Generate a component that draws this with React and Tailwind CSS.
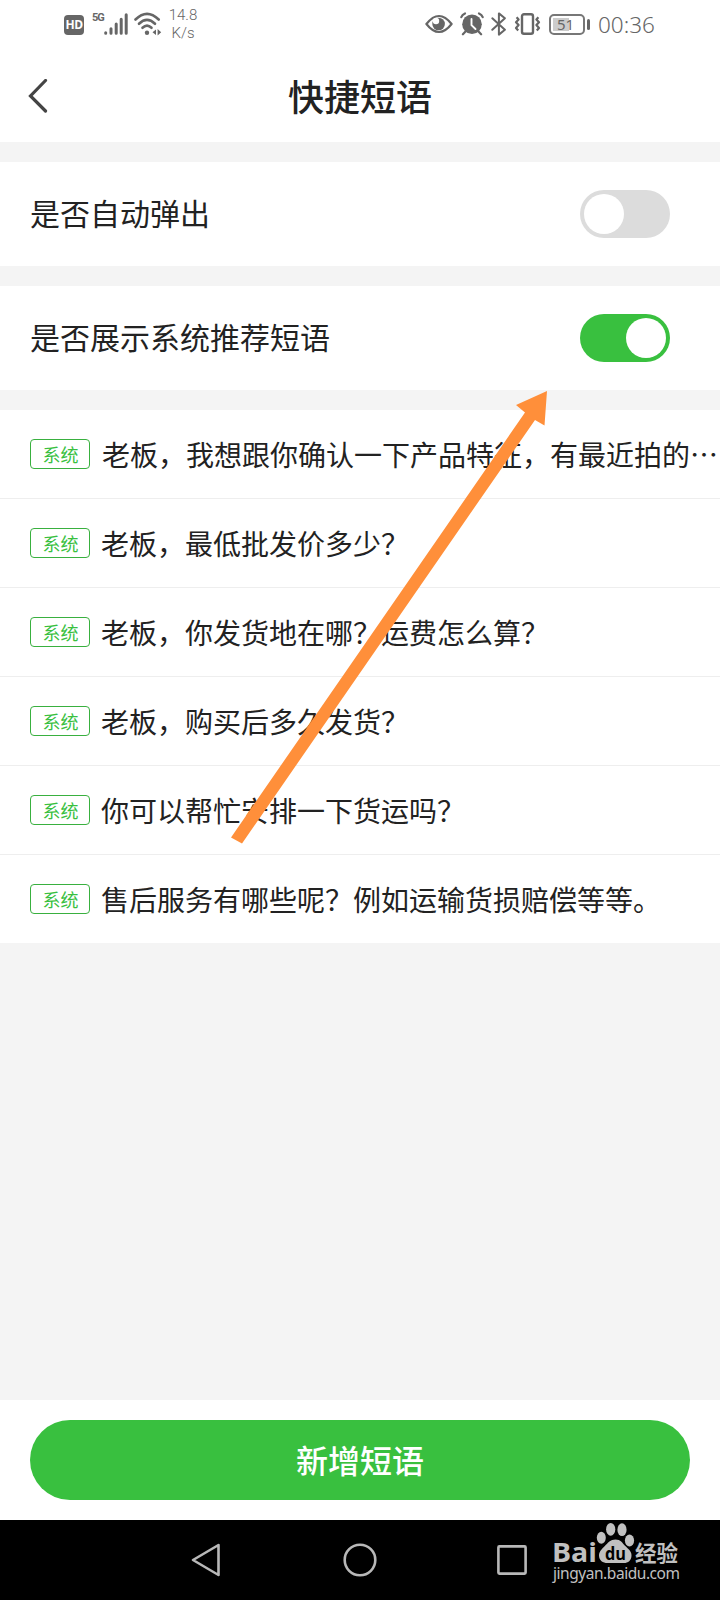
const phrases = [
  "老板，我想跟你确认一下产品特征，有最近拍的…",
  "老板，最低批发价多少？",
  "老板，你发货地在哪？运费怎么算？",
  "老板，购买后多久发货？",
  "你可以帮忙安排一下货运吗？",
  "售后服务有哪些呢？例如运输货损赔偿等等。",
];

function SignalIcon() {
  return (
    <svg width="24" height="22" viewBox="0 0 24 22" className="mt-[13px]" stroke="#666" strokeWidth="3" strokeLinecap="round">
      <path d="M1.7 20.3v-.6M7 20.3v-4.5M12.2 20.3V11M17.2 20.3V6.3M22.2 20.3V1.8" />
    </svg>
  );
}

function WifiIcon() {
  return (
    <svg width="28" height="24" viewBox="0 0 28 24" className="ml-[6px] mt-[12px]" fill="none" stroke="#666" strokeWidth="2.6" strokeLinecap="round">
      <path d="M1.5 7.5Q13 -3.8 24.7 7.5" />
      <path d="M5 11.8Q13 4 21 11.8" />
      <path d="M8.5 15.8Q13 11.6 17.5 15.8" />
      <circle cx="13" cy="20.8" r="2.2" fill="#666" stroke="none" />
      <path d="M22 17.500v5.500l-3.500-2.700zM23.600 17v6.500l3.600-3.200z" fill="#666" stroke="none" />
    </svg>
  );
}

function EyeIcon() {
  return (
    <svg width="28" height="20" viewBox="0 0 28 20" className="mt-[14px]">
      <path d="M1.4 10Q14 -6 26.6 10Q14 26 1.4 10z" fill="none" stroke="#666" strokeWidth="2.2" strokeLinejoin="round" />
      <circle cx="13.6" cy="10" r="6.3" fill="#666" />
      <circle cx="11" cy="7" r="3.2" fill="#fff" />
    </svg>
  );
}

function AlarmIcon() {
  return (
    <svg width="24" height="24" viewBox="0 0 24 24" className="ml-[7px] mt-[12px]" fill="none" strokeLinecap="round">
      <circle cx="12" cy="12.3" r="9.8" fill="#666" />
      <path d="M1.3 5.2Q2.2 2.8 5 1.5M22.7 5.2Q21.8 2.8 19 1.5M5.5 19.5l-2.6 2.8M18.5 19.5l2.6 2.8" stroke="#666" strokeWidth="2.2" />
      <path d="M11.5 7v6.2l4 3.8" stroke="#fff" strokeWidth="1.9" />
    </svg>
  );
}

function BluetoothIcon() {
  return (
    <svg width="16" height="24" viewBox="0 0 16 24" className="ml-[7px] mt-[12px]" fill="none" stroke="#666" strokeWidth="2" strokeLinejoin="round" strokeLinecap="round">
      <path d="M1.3 6.3l12.6 11.5-6 4.8V1.4l6 4.8L1.3 17.8" />
    </svg>
  );
}

function VibrateIcon() {
  return (
    <svg width="28" height="24" viewBox="0 0 28 24" className="ml-[7px] mt-[12px]" fill="none" stroke="#666">
      <rect x="8" y="2.2" width="11" height="19.6" rx="2" strokeWidth="2.4" />
      <path d="M2.6 5.2l2 2.3-2.6 2.8 2.6 2.8-2.6 2.8 2.2 2.5M24.4 5.2l-2 2.3 2.6 2.8-2.6 2.8 2.6 2.8-2.2 2.5" strokeWidth="2.2" strokeLinejoin="round" />
    </svg>
  );
}

function StatusBar() {
  return (
    <div className="flex h-[50px] items-start pl-[64px] pr-[60px] font-['Noto_Sans'] text-[#666]">
      <div className="mt-[15px] flex h-[20px] w-[20px] items-center justify-center rounded-[4px] bg-[#666] font-['Open_Sans'] text-[12px] leading-none font-bold tracking-[-0.5px] text-white">
        HD
      </div>
      <span className="mt-[12px] ml-[8px] w-[12px] font-['Roboto'] text-[11px] leading-[12px] font-bold tracking-[-1px]">5G</span>
      <SignalIcon />
      <WifiIcon />
      <div className="ml-[5px] mt-[6px] w-[32px] text-center font-['Roboto'] text-[15px] leading-[18px] font-light">
        <div>14.8</div>
        <div>K/s</div>
      </div>
      <div className="ml-auto flex items-start">
        <EyeIcon />
        <AlarmIcon />
        <BluetoothIcon />
        <VibrateIcon />
        <div className="ml-[7px] mt-[14px] flex items-center">
          <div className="relative flex h-[21px] w-[36px] items-center justify-center rounded-[5px] border-2 border-[#777] text-[15px] leading-none">
            <div className="absolute top-[2px] left-[2px] h-[13px] w-[16px] bg-[#ccc]" />
            <span className="relative -mt-px pr-[3px]">51</span>
          </div>
          <div className="ml-[2px] h-[11px] w-[3px] rounded-sm bg-[#666]" />
        </div>
        <span className="ml-[8px] mt-[10px] w-[62px] text-[22.5px] leading-[30px] font-light whitespace-nowrap">00:36</span>
      </div>
    </div>
  );
}

function Toggle({ on }) {
  return (
    <div
      className={`flex h-[48px] w-[90px] items-center rounded-full px-[4px] ${
        on ? "justify-end bg-[#39c03f]" : "justify-start bg-[#dcdcdc]"
      }`}
    >
      <div className="h-[40px] w-[40px] rounded-full bg-white" />
    </div>
  );
}

function SettingRow({ label, on }) {
  return (
    <div className="mt-[20px] flex h-[104px] items-center justify-between bg-white pr-[50px] pl-[30px]">
      <span className="pb-[4px] text-[30px] leading-none">{label}</span>
      <Toggle on={on} />
    </div>
  );
}

function BaiduMark() {
  return (
    <svg width="130" height="66" viewBox="0 0 130 66" className="absolute top-[2px] left-[551px]" fill="#c0c0c0">
      <text x="1" y="39.500" fontFamily="Open Sans, sans-serif" fontWeight="700" fontSize="27" textLength="45" lengthAdjust="spacingAndGlyphs">Bai</text>
      <ellipse cx="50.300" cy="15.700" rx="4.500" ry="6" />
      <ellipse cx="59.700" cy="7.300" rx="4.600" ry="6.400" />
      <ellipse cx="71" cy="7.700" rx="4.600" ry="6.400" />
      <ellipse cx="78.500" cy="18.500" rx="4.600" ry="6" />
      <path d="M64.500 17.500c5 0 7 3.500 9.500 6.300 3 3 6.500 5.200 6.500 9.700 0 5-3.500 7.500-7.500 7.500H56.500c-4.500 0-8.500-2.500-8.500-7.500 0-4 3-6.500 6-9.700 2.700-2.800 5.500-6.300 10.500-6.300z" />
      <text x="54" y="37.500" fill="#000" fontFamily="Open Sans, sans-serif" fontWeight="700" fontSize="18" textLength="21" lengthAdjust="spacingAndGlyphs">du</text>
      <text x="84" y="38.500" fontFamily="Noto Sans CJK SC, sans-serif" fontWeight="700" fontSize="21.500" textLength="43">经验</text>
      <text x="2" y="56.500" fontFamily="Noto Sans, sans-serif" fontSize="15.500" textLength="127">jingyan.baidu.com</text>
    </svg>
  );
}

function NavBar() {
  return (
    <div className="relative h-[80px] bg-black">
      <svg width="720" height="80" viewBox="0 0 720 80" fill="none" stroke="#b8b8b8" strokeWidth="2.6" strokeLinejoin="round">
        <path d="M218.500 25v30L193 40z" />
        <circle cx="360" cy="40" r="15.300" />
        <rect x="498.400" y="26.400" width="27.200" height="27.200" rx="1" />
      </svg>
      <BaiduMark />
    </div>
  );
}

export default function App() {
  return (
    <div className="relative flex h-[1600px] w-[720px] flex-col overflow-hidden bg-[#f4f4f4] font-['Noto_Sans_CJK_SC',sans-serif] text-[#222]">
      <div className="h-[142px] bg-white">
        <StatusBar />
        <div className="grid h-[92px] grid-cols-[1fr_auto_1fr] items-center">
          <svg width="20" height="34" viewBox="0 0 20 34" className="ml-[28px]" fill="none" stroke="#444" strokeWidth="3.2" strokeLinecap="round">
            <path d="M17.500 1.500L2.500 17l15 15" />
          </svg>
          <h1 className="pb-[3px] text-[36px] leading-none font-medium">快捷短语</h1>
        </div>
      </div>

      <SettingRow label="是否自动弹出" on={false} />
      <SettingRow label="是否展示系统推荐短语" on />

      <div className="mt-[20px] bg-white">
        {phrases.map((phrase, i) => (
          <div
            key={phrase}
            className="flex h-[89px] items-center border-b border-[#eee] pl-[30px] last:h-[88px] last:border-b-0"
          >
            <span className="flex h-[30px] w-[60px] shrink-0 items-center justify-center rounded-[4px] border border-[#39b03f] pb-px pl-px text-[18px] leading-none text-[#39c03f]">
              系统
            </span>
            <span className={`pb-px text-[28px] leading-none whitespace-nowrap ${i === 0 ? "ml-[12px]" : "ml-[11px]"}`}>
              {phrase}
            </span>
          </div>
        ))}
      </div>

      <div className="mt-auto h-[120px] bg-white px-[30px] py-[20px]">
        <button className="flex h-[80px] w-full items-center justify-center rounded-full bg-[#39c03f] pb-[3px] text-[32px] leading-none font-medium text-white">
          新增短语
        </button>
      </div>
      <NavBar />

      <svg width="320" height="460" viewBox="0 0 320 460" className="absolute top-[388px] left-[229px]">
        <path d="M318 3l-2.500 34.500-9.500-5.500L13 455.500 2 449.500 296 24.500l-9-7.500z" fill="#ff8f3a" />
      </svg>
    </div>
  );
}
